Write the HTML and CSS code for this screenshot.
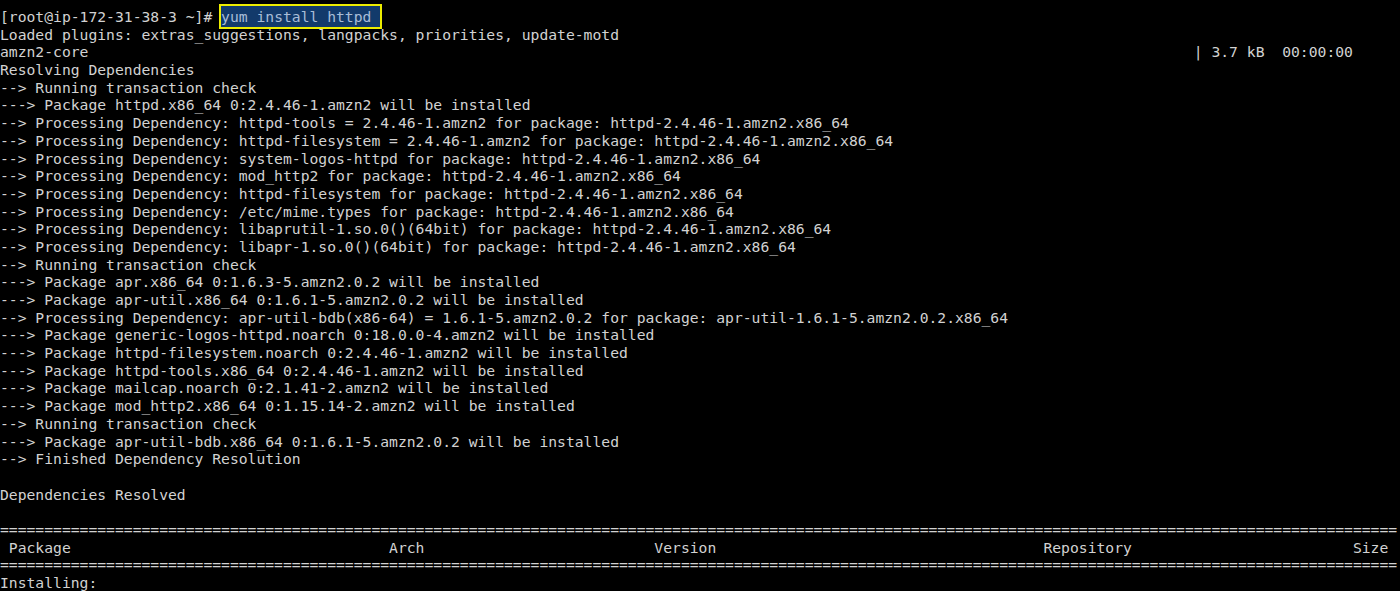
FILE: index.html
```html
<!DOCTYPE html>
<html>
<head>
<meta charset="utf-8">
<link rel="stylesheet" href="styles.css">
</head>
<body>
<div class="term">
<div class="line">[root@ip-172-31-38-3 ~]# <span class="sel">yum install httpd </span></div>
<div class="line">Loaded plugins: extras_suggestions, langpacks, priorities, update-motd</div>
<div class="line">amzn2-core                                                                                                                             | 3.7 kB  00:00:00</div>
<div class="line">Resolving Dependencies</div>
<div class="line">--&gt; Running transaction check</div>
<div class="line">---&gt; Package httpd.x86_64 0:2.4.46-1.amzn2 will be installed</div>
<div class="line">--&gt; Processing Dependency: httpd-tools = 2.4.46-1.amzn2 for package: httpd-2.4.46-1.amzn2.x86_64</div>
<div class="line">--&gt; Processing Dependency: httpd-filesystem = 2.4.46-1.amzn2 for package: httpd-2.4.46-1.amzn2.x86_64</div>
<div class="line">--&gt; Processing Dependency: system-logos-httpd for package: httpd-2.4.46-1.amzn2.x86_64</div>
<div class="line">--&gt; Processing Dependency: mod_http2 for package: httpd-2.4.46-1.amzn2.x86_64</div>
<div class="line">--&gt; Processing Dependency: httpd-filesystem for package: httpd-2.4.46-1.amzn2.x86_64</div>
<div class="line">--&gt; Processing Dependency: /etc/mime.types for package: httpd-2.4.46-1.amzn2.x86_64</div>
<div class="line">--&gt; Processing Dependency: libaprutil-1.so.0()(64bit) for package: httpd-2.4.46-1.amzn2.x86_64</div>
<div class="line">--&gt; Processing Dependency: libapr-1.so.0()(64bit) for package: httpd-2.4.46-1.amzn2.x86_64</div>
<div class="line">--&gt; Running transaction check</div>
<div class="line">---&gt; Package apr.x86_64 0:1.6.3-5.amzn2.0.2 will be installed</div>
<div class="line">---&gt; Package apr-util.x86_64 0:1.6.1-5.amzn2.0.2 will be installed</div>
<div class="line">--&gt; Processing Dependency: apr-util-bdb(x86-64) = 1.6.1-5.amzn2.0.2 for package: apr-util-1.6.1-5.amzn2.0.2.x86_64</div>
<div class="line">---&gt; Package generic-logos-httpd.noarch 0:18.0.0-4.amzn2 will be installed</div>
<div class="line">---&gt; Package httpd-filesystem.noarch 0:2.4.46-1.amzn2 will be installed</div>
<div class="line">---&gt; Package httpd-tools.x86_64 0:2.4.46-1.amzn2 will be installed</div>
<div class="line">---&gt; Package mailcap.noarch 0:2.1.41-2.amzn2 will be installed</div>
<div class="line">---&gt; Package mod_http2.x86_64 0:1.15.14-2.amzn2 will be installed</div>
<div class="line">--&gt; Running transaction check</div>
<div class="line">---&gt; Package apr-util-bdb.x86_64 0:1.6.1-5.amzn2.0.2 will be installed</div>
<div class="line">--&gt; Finished Dependency Resolution</div>
<div class="line"> </div>
<div class="line">Dependencies Resolved</div>
<div class="line"> </div>
<div class="line">==============================================================================================================================================================</div>
<div class="line"> Package                                    Arch                          Version                                     Repository                         Size</div>
<div class="line">==============================================================================================================================================================</div>
<div class="line">Installing:</div>
</div>
</body>
</html>
```
FILE: styles.css
```css
html, body {
  margin: 0;
  padding: 0;
  background: #000;
  overflow: hidden;
}
.term {
  padding: 8px 0 0 0;
  font-family: "DejaVu Sans Mono", monospace;
  font-size: 14.7px;
  line-height: 17.7px;
  color: #d2d2d2;
}
.line {
  white-space: pre;
  height: 17.7px;
}
.sel {
  background: #123a6b;
  color: #a8bdd8;
  padding: 2px 0 2px 0;
  box-shadow: 0 0 0 2px #ecec00;
}
```
